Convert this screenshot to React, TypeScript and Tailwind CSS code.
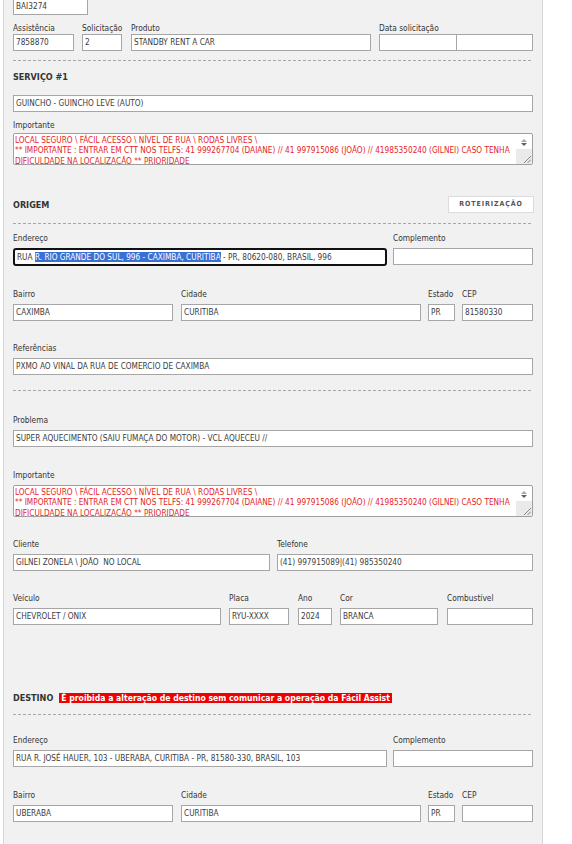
import React from 'react';

// Painel de atendimento: formulário de assistência / origem / destino
const labelCls = 'h-[12px] leading-[12px] text-[8.3px] text-[#333] mb-[4px] whitespace-nowrap';
const topLabelCls = 'h-[12px] leading-[12px] text-[8.3px] text-[#333] whitespace-nowrap';
const inputCls =
  'h-[17px] border border-[#a6a6a6] bg-white pl-[2px] text-[8.2px] leading-[15px] text-[#3c3c3c] whitespace-pre overflow-hidden';

function Field({ label, value, className }: { label?: string; value?: string; className?: string }) {
  return (
    <div className={className}>
      <div className={labelCls}>{label}</div>
      <div className={inputCls}>{value}</div>
    </div>
  );
}

function Dashed({ className }: { className?: string }) {
  return (
    <div
      className={`h-px bg-[linear-gradient(to_right,#a8a8a8_3px,transparent_3px)] bg-[length:5px_1px] ${className ?? ''}`}
    />
  );
}

function TextArea() {
  return (
    <div className="h-[32px] border border-[#a0a0a0] rounded-[2px] bg-white flex overflow-hidden">
      <div className="flex-1 pl-[1px] pt-[1px] text-[8.2px] leading-[10.3px] text-[#e41e26] whitespace-nowrap overflow-hidden">
        <div>LOCAL SEGURO \ FÁCIL ACESSO \ NÍVEL DE RUA \ RODAS LIVRES \</div>
        <div>** IMPORTANTE : ENTRAR EM CTT NOS TELFS: 41 999267704 (DAIANE) // 41 997915086 (JOÃO) // 41985350240 (GILNEI) CASO TENHA</div>
        <div>DIFICULDADE NA LOCALIZAÇÃO ** PRIORIDADE</div>
      </div>
      <div className="w-[16px] flex flex-col">
        <div className="h-[15px] flex flex-col items-center justify-center gap-[1px] pt-[2px]">
          <svg width="6" height="3" viewBox="0 0 6 3">
            <path d="M0 3 L3 0 L6 3 Z" fill="#a8a8a8" />
          </svg>
          <svg width="6" height="3" viewBox="0 0 6 3">
            <path d="M0 0 L6 0 L3 3 Z" fill="#606060" />
          </svg>
        </div>
        <div className="flex-1 bg-[#eaeaea] flex items-end justify-end">
          <svg width="8" height="8" viewBox="0 0 8 8" className="mb-[1px] mr-[1px]">
            <path d="M1 8 L8 1 M4.5 8 L8 4.5" stroke="#7a7a7a" strokeWidth="0.9" />
          </svg>
        </div>
      </div>
    </div>
  );
}

export default function App() {
  return (
    <div className="min-h-screen bg-white font-['DejaVu_Sans_Condensed',Roboto,'Liberation_Sans',sans-serif]">
      <div className="ml-[3px] w-[540px] min-h-[844px] bg-[#f1f1f1] border-x border-[#d6d6d6] px-[9px] pb-[30px] overflow-hidden">
        {/* topo */}
        <div className={`${inputCls} w-[75px] -mt-[2px]`}>BAI3274</div>

        <div className="flex mt-[7px]">
          <div className="w-[61px]">
            <div className={topLabelCls}>Assistência</div>
            <div className={inputCls}>7858870</div>
          </div>
          <div className="ml-[8px] w-[40px]">
            <div className={topLabelCls}>Solicitação</div>
            <div className={inputCls}>2</div>
          </div>
          <div className="ml-[9px] w-[240px]">
            <div className={topLabelCls}>Produto</div>
            <div className={inputCls}>STANDBY RENT A CAR</div>
          </div>
          <div className="ml-[8px] w-[154px]">
            <div className={topLabelCls}>Data solicitação</div>
            <div className="flex">
              <div className={`${inputCls} w-[78px]`} />
              <div className={`${inputCls} w-[77px] -ml-px`} />
            </div>
          </div>
        </div>

        <Dashed className="mt-[9px]" />

        {/* serviço */}
        <div className="mt-[10px] h-[12px] leading-[12px] text-[9px] font-bold text-[#333]">SERVIÇO #1</div>
        <div className={`${inputCls} mt-[12px]`}>GUINCHO - GUINCHO LEVE (AUTO)</div>

        <div className="mt-[7px]">
          <div className={`${topLabelCls} mb-[2px]`}>Importante</div>
          <TextArea />
        </div>

        {/* origem */}
        <div className="mt-[31px] h-[17px] flex items-center justify-between">
          <div className="text-[9px] font-bold text-[#333] leading-[12px]">ORIGEM</div>
          <div className="-mr-px w-[86px] h-[17px] bg-white border border-[#dcdcdc] flex items-center justify-center text-[7px] font-bold tracking-[0.9px] text-[#555]">
            ROTEIRIZAÇÃO
          </div>
        </div>

        <Dashed className="mt-[10px]" />

        <div className="flex mt-[8px]">
          <div className="w-[374px]">
            <div className={labelCls}>Endereço</div>
            <div className="h-[18px] border-2 border-[#111] rounded-[3px] bg-white pl-[2px] text-[8.2px] leading-[14px] text-[#3c3c3c] whitespace-nowrap overflow-hidden">
              RUA <span className="bg-[#3a6fd4] text-white">R. RIO GRANDE DO SUL, 996 - CAXIMBA, CURITIBA</span> - PR, 80620-080, BRASIL, 996
            </div>
          </div>
          <Field label="Complemento" value="" className="ml-[6px] w-[140px]" />
        </div>

        <div className="flex mt-[22px]">
          <Field label="Bairro" value="CAXIMBA" className="w-[160px]" />
          <Field label="Cidade" value="CURITIBA" className="ml-[8px] w-[240px]" />
          <Field label="Estado" value="PR" className="ml-[7px] w-[27px]" />
          <Field label="CEP" value="81580330" className="ml-[7px] w-[71px]" />
        </div>

        <Field label="Referências" value="PXMO AO VINAL DA RUA DE COMERCIO DE CAXIMBA" className="mt-[21px]" />

        <Dashed className="mt-[15px]" />

        <Field label="Problema" value="SUPER AQUECIMENTO (SAIU FUMAÇA DO MOTOR) - VCL AQUECEU //" className="mt-[23px]" />

        <div className="mt-[22px]">
          <div className={labelCls}>Importante</div>
          <TextArea />
        </div>

        <div className="flex mt-[21px]">
          <Field label="Cliente" value="GILNEI ZONELA \ JOÃO  NO LOCAL" className="w-[257px]" />
          <Field label="Telefone" value="(41) 997915089|(41) 985350240" className="ml-[7px] w-[256px]" />
        </div>

        <div className="flex mt-[21px]">
          <Field label="Veículo" value="CHEVROLET / ONIX" className="w-[208px]" />
          <Field label="Placa" value="RYU-XXXX" className="ml-[8px] w-[60px]" />
          <Field label="Ano" value="2024" className="ml-[9px] w-[34px]" />
          <Field label="Cor" value="BRANCA" className="ml-[8px] w-[98px]" />
          <Field label="Combustível" value="" className="ml-[9px] w-[86px]" />
        </div>

        {/* destino */}
        <div className="mt-[67px] h-[12px] flex items-center gap-[6px]">
          <div className="text-[9px] font-bold text-[#333] leading-[12px]">DESTINO</div>
          <div className="bg-[#f00000] text-white text-[8.6px] font-bold leading-[10px] px-[2px] whitespace-nowrap">
            É proibida a alteração de destino sem comunicar a operação da Fácil Assist
          </div>
        </div>

        <Dashed className="mt-[10px]" />

        <div className="flex mt-[19px]">
          <Field
            label="Endereço"
            value="RUA R. JOSÉ HAUER, 103 - UBERABA, CURITIBA - PR, 81580-330, BRASIL, 103"
            className="w-[374px]"
          />
          <Field label="Complemento" value="" className="ml-[6px] w-[140px]" />
        </div>

        <div className="flex mt-[22px]">
          <Field label="Bairro" value="UBERABA" className="w-[160px]" />
          <Field label="Cidade" value="CURITIBA" className="ml-[8px] w-[240px]" />
          <Field label="Estado" value="PR" className="ml-[7px] w-[27px]" />
          <Field label="CEP" value="" className="ml-[7px] w-[71px]" />
        </div>
      </div>
    </div>
  );
}
